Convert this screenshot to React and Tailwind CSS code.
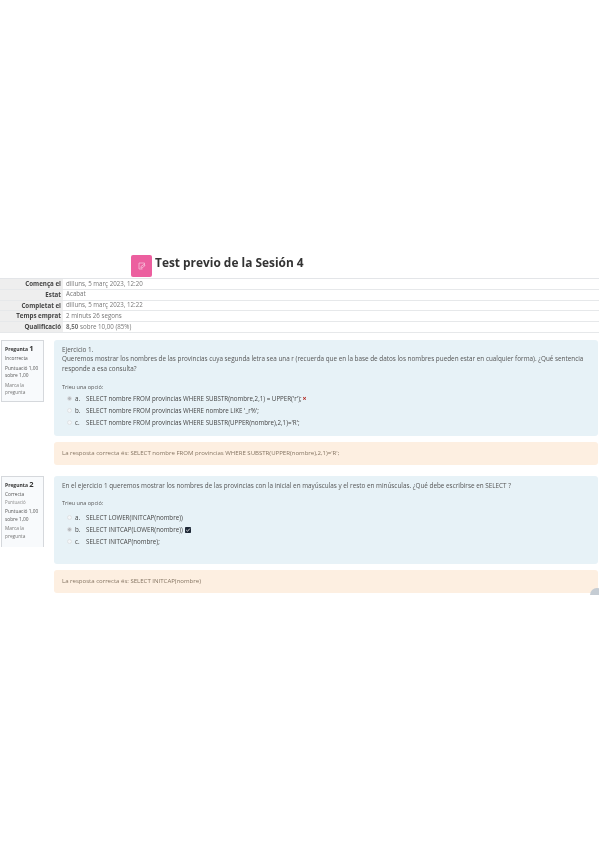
const summary = [
  ['Comença el', 'dilluns, 5 març 2023, 12:20'],
  ['Estat', 'Acabat'],
  ['Completat el', 'dilluns, 5 març 2023, 12:22'],
  ['Temps emprat', '2 minuts 26 segons'],
  ['Qualificació', <><b>8,50</b> sobre 10,00 (85%)</>],
];

function Side({ num, status, extra, h }) {
  return (
    <div className={`w-[43px] shrink-0 ml-[1px] mr-[10px] bg-[#f8fafc] border border-[#d5d8dc] pl-[3px] pt-[3px] text-[4.8px] leading-[7.6px] text-[#555] whitespace-nowrap ${h}`}>
      <div className="font-bold text-[#333] text-[5px] leading-[8px]">Pregunta <span className="text-[7.5px]">{num}</span></div>
      <div className="mt-[2px]">{status}</div>
      {extra && <div className="text-[#888] text-[4.4px]">{extra}</div>}
      <div className="mt-[2px]">Puntuació 1,00<br />sobre 1,00</div>
      <div className="mt-[2px] text-[#777]">Marca la<br />pregunta</div>
    </div>
  );
}

function Option({ letter, text, checked, mark }) {
  return (
    <div className="flex items-center h-[12px] pl-[5px] text-[6.2px] text-[#444]">
      <span className={`w-[5px] h-[5px] rounded-full border border-[#dfe3e6] ${checked ? 'bg-[#b5b9bd]' : 'bg-[#f4f6f8]'}`} />
      <span className="w-[14px] pl-[3px]">{letter}</span>
      <span>{text}</span>
      {mark === 'wrong' && <span className="ml-[1px] text-[#b3261e] text-[7px] font-bold leading-none">×</span>}
      {mark === 'right' && (
        <svg className="ml-[2px]" width="6" height="6" viewBox="0 0 6 6">
          <rect width="6" height="6" rx="0.8" fill="#1f2937" />
          <path d="M1.2 3 L2.5 4.3 L4.8 1.6" stroke="#fff" strokeWidth="0.8" fill="none" />
        </svg>
      )}
    </div>
  );
}

export default function App() {
  return (
    <div className="relative w-[599px] h-[848px] bg-white overflow-hidden pt-[255px] blur-[0.35px] font-['Open_Sans','Liberation_Sans',sans-serif]">
      <div className="flex items-center pl-[131px] h-[22px]">
        <div className="w-[21px] h-[22px] rounded-[2px] bg-[#ec5f9f] flex items-center justify-center">
          <svg width="8" height="8" viewBox="0 0 8 8" fill="none" stroke="#f9cfe2" strokeWidth="0.7">
            <path d="M6.5 3.5V1H1v6h3.5" />
            <path d="M3 4.5l3-2 1 1-3 2.5H3z" />
          </svg>
        </div>
        <h1 className="ml-[3px] mb-[6px] text-[11.9px] font-bold text-[#333] leading-none">Test previo de la Sesión 4</h1>
      </div>

      <div className="mt-[1px] border-t border-[#e3e5e8] text-[6.2px]">
        {summary.map(([label, value]) => (
          <div key={label} className="flex h-[10.8px] border-b border-[#e6e8ea] items-center">
            <div className="w-[63px] h-full bg-[#eeeeee] text-right pr-[2px] font-bold text-[#444] leading-[10.8px] whitespace-nowrap">{label}</div>
            <div className="pl-[3px] text-[#777] leading-[10.8px] whitespace-nowrap">{value}</div>
          </div>
        ))}
      </div>

      <div className="mt-[7px] flex">
        <Side num="1" status="Incorrecta" h="h-[62px]" />
        <div className="flex-1 mr-[1px]">
          <div className="h-[96px] bg-[#e7f2f7] rounded-[3px] pl-[8px] pr-[10px] pt-[5px] text-[6.35px] leading-[9.5px] text-[#555]">
            <div>Ejercicio 1.</div>
            <div>Queremos mostrar los nombres de las provincias cuya segunda letra sea una r (recuerda que en la base de datos los nombres pueden estar en cualquier forma). ¿Qué sentencia responde a esa consulta?</div>
            <div className="mt-[10px] text-[5.5px]">Trieu una opció:</div>
            <Option letter="a." text="SELECT nombre FROM provincias WHERE SUBSTR(nombre,2,1) = UPPER('r');" checked mark="wrong" />
            <Option letter="b." text="SELECT nombre FROM provincias WHERE nombre LIKE '_r%';" />
            <Option letter="c." text="SELECT nombre FROM provincias WHERE SUBSTR(UPPER(nombre),2,1)='R';" />
          </div>
          <div className="mt-[6px] h-[23px] bg-[#fdefe1] rounded-[3px] pl-[8px] text-[6.05px] leading-[23px] text-[#857563]">
            La resposta correcta és: SELECT nombre FROM provincias WHERE SUBSTR(UPPER(nombre),2,1)='R';
          </div>
        </div>
      </div>

      <div className="mt-[11px] flex">
        <Side num="2" status="Correcta" extra="Puntuació" h="h-[71px] border-b-0" />
        <div className="flex-1 mr-[1px]">
          <div className="h-[88px] bg-[#e7f2f7] rounded-[3px] pl-[8px] pr-[10px] pt-[5px] text-[6.35px] leading-[9.5px] text-[#555]">
            <div className="whitespace-nowrap">En el ejercicio 1 queremos mostrar los nombres de las provincias con la inicial en mayúsculas y el resto en minúsculas. ¿Qué debe escribirse en SELECT ?</div>
            <div className="mt-[9px] mb-[3px] text-[5.5px]">Trieu una opció:</div>
            <Option letter="a." text="SELECT LOWER(INITCAP(nombre))" />
            <Option letter="b." text="SELECT INITCAP(LOWER(nombre))" checked mark="right" />
            <Option letter="c." text="SELECT INITCAP(nombre);" />
          </div>
          <div className="mt-[6px] h-[23px] bg-[#fdefe1] rounded-[3px] pl-[8px] text-[6.05px] leading-[23px] text-[#857563]">
            La resposta correcta és: SELECT INITCAP(nombre)
          </div>
        </div>
      </div>

      <div className="absolute left-[590px] top-[588px] w-[9px] h-[7px] overflow-hidden">
        <div className="w-[14px] h-[14px] rounded-full bg-[#c5ccd3]" />
      </div>
    </div>
  );
}
